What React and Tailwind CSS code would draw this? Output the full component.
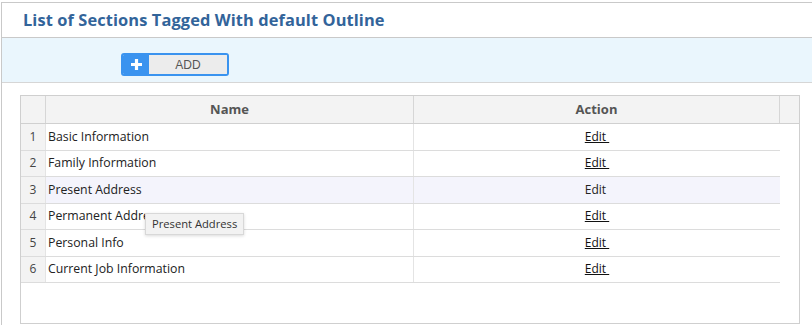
import React from 'react';

const rows = [
  { n: 1, name: 'Basic Information' },
  { n: 2, name: 'Family Information' },
  { n: 3, name: 'Present Address', hover: true },
  { n: 4, name: 'Permanent Address' },
  { n: 5, name: 'Personal Info' },
  { n: 6, name: 'Current Job Information' },
];

export default function App() {
  return (
    <div className="w-[812px] h-[325px] overflow-hidden bg-white" style={{ fontFamily: '"Open Sans", "Liberation Sans", sans-serif' }}>
      <div className="relative ml-[1px] mt-[2px] h-[323px] border-l border-t border-[#c9c9c9]">
        {/* header */}
        <div className="h-[35px] flex items-center pl-[21px] border-b border-[#c9c9c9]">
          <h1 className="text-[16.4px] font-bold text-[#32649a] tracking-[0.1px]">List of Sections Tagged With default Outline</h1>
        </div>

        {/* toolbar */}
        <div className="h-[45px] bg-[#eaf6fd] border-b border-[#d6d6d6] pt-[15px] pl-[119px]">
          <button className="flex h-[23px] w-[108px] rounded-[3px] border-2 border-[#3a93ef] overflow-hidden">
            <span className="w-[26px] h-full bg-[#3a93ef] flex items-center justify-center">
              <svg width="13" height="13" viewBox="0 0 13 13">
                <path d="M6.5 1v11M1 6.5h11" stroke="#fff" strokeWidth="3.2" />
              </svg>
            </span>
            <span className="flex-1 h-full bg-[#ececec] flex items-center justify-center text-[12px] text-[#555]" style={{ fontFamily: '"Liberation Sans", Arial, sans-serif' }}>ADD</span>
          </button>
        </div>

        {/* table */}
        <div className="ml-[18px] mt-[12px] w-[780px] h-[229px] border border-[#cfcfcf] text-[12px] text-[#222]">
          <div className="flex h-[28px] bg-[#f3f3f3] border-b border-[#d0d0d0] font-bold text-[#555] text-[13px]">
            <div className="w-[25px] border-r border-[#d6d6d6]" />
            <div className="w-[368px] border-r border-[#d6d6d6] flex items-center justify-center">Name</div>
            <div className="w-[366px] border-r border-[#d6d6d6] flex items-center justify-center">Action</div>
            <div className="flex-1" />
          </div>
          <div className="w-[759px]">
            {rows.map((r) => (
              <div key={r.n} className={`flex h-[26.5px] border-b border-[#dcdcdc] ${r.hover ? 'bg-[#f4f4fc]' : ''}`}>
                <div className="w-[25px] bg-[#f3f3f3] border-r border-[#e4e4e4] flex items-center justify-center text-[#444]">{r.n}</div>
                <div className="w-[368px] border-r border-[#e4e4e4] flex items-center pl-[2px] text-[12.3px]">{r.name}</div>
                <div className="flex-1 flex items-center justify-center">
                  <span className={r.hover ? 'text-[#222]' : 'underline text-[#111]'}>Edit&nbsp;</span>
                </div>
              </div>
            ))}
          </div>
        </div>

        {/* tooltip */}
        <div className="absolute left-[143px] top-[210px] h-[22px] px-[6px] flex items-center bg-[#f2f2f2] border border-[#d8d8d8] shadow-[0_1px_3px_rgba(0,0,0,0.15)] text-[11.2px] text-[#333] whitespace-nowrap">
          Present Address
        </div>
      </div>
    </div>
  );
}
